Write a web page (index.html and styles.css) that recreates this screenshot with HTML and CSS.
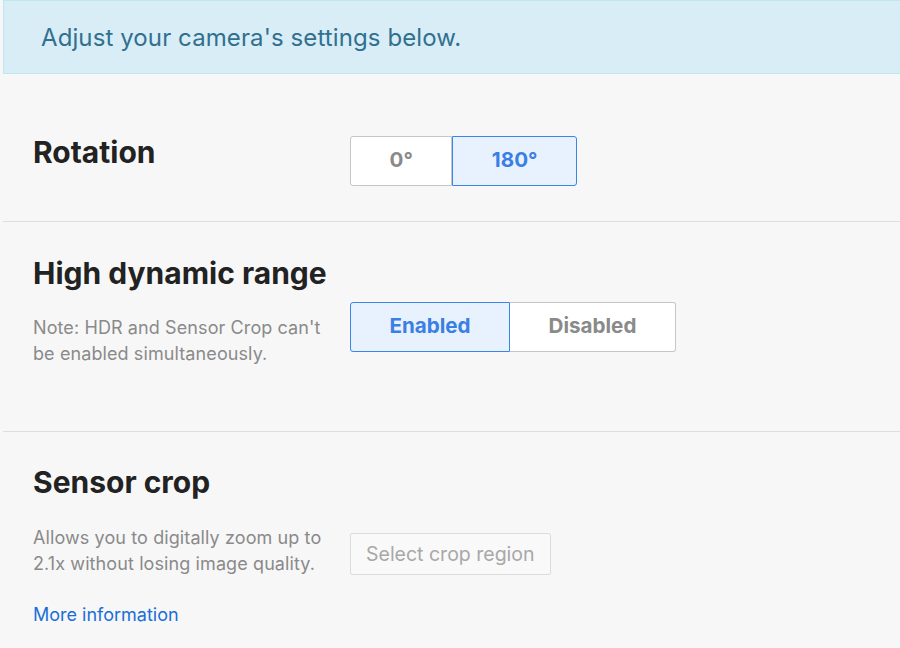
FILE: index.html
```html
<!DOCTYPE html>
<html>
<head>
<meta charset="utf-8">
<link rel="stylesheet" href="styles.css">
</head>
<body>
<div class="page">
  <div class="banner">Adjust your camera's settings below.</div>

  <section class="setting s-rotation">
    <div class="left">
      <h2>Rotation</h2>
    </div>
    <div class="right">
      <div class="seg">
        <button class="opt">0°</button>
        <button class="opt active">180°</button>
      </div>
    </div>
  </section>

  <section class="setting s-hdr">
    <div class="left">
      <h2>High dynamic range</h2>
      <p class="note">Note: HDR and Sensor Crop can't be enabled simultaneously.</p>
    </div>
    <div class="right">
      <div class="seg">
        <button class="opt active">Enabled</button>
        <button class="opt">Disabled</button>
      </div>
    </div>
  </section>

  <section class="setting s-crop">
    <div class="left">
      <h2>Sensor crop</h2>
      <p class="note">Allows you to digitally zoom up to 2.1x without losing image quality.</p>
      <a class="more" href="#">More information</a>
    </div>
    <div class="right">
      <button class="plain" disabled>Select crop region</button>
    </div>
  </section>
</div>
</body>
</html>
```

FILE: styles.css
```css
html, body {
  margin: 0;
  padding: 0;
  background: #f7f7f7;
}
body {
  font-family: Inter, "Noto Sans", sans-serif;
  color: #222;
  overflow: hidden;
  height: 648px;
}
.page {
  margin-left: 3px;
}
.banner {
  background: #d9edf7;
  border: 1px solid #bce8f1;
  border-right: none;
  color: #31708f;
  font-size: 24px;
  letter-spacing: 0.1px;
  height: 72px;
  box-sizing: content-box;
  display: flex;
  align-items: center;
  padding-left: 37px;
}
.setting {
  display: flex;
  align-items: flex-start;
  padding-left: 30px;
}
.setting + .setting {
  border-top: 1px solid #dedede;
}
.left {
  width: 317px;
  flex: none;
}
h2 {
  margin: 0;
  font-size: 30px;
  font-weight: 700;
  line-height: 36px;
  color: #222;
}
.note {
  margin: 0;
  max-width: 300px;
  font-size: 18px;
  line-height: 26px;
  color: #8a8a8a;
  letter-spacing: 0.1px;
}
.s-rotation {
  padding-top: 60px;
  height: 87px;
}
.s-rotation .right {
  margin-top: 2px;
}
.s-hdr {
  padding-top: 33px;
  height: 176px;
}
.s-hdr .note {
  margin-top: 24px;
}
.s-hdr .right {
  margin-top: 47px;
}
.s-crop {
  padding-top: 32px;
  height: 184px;
}
.s-crop .note {
  margin-top: 25px;
}
.s-crop .right {
  margin-top: 69px;
}
.more {
  display: block;
  margin-top: 26px;
  font-size: 18px;
  line-height: 24px;
  color: #1a6fd6;
  text-decoration: none;
}
.seg {
  display: flex;
}
.opt {
  font-family: inherit;
  font-size: 20.6px;
  font-weight: 700;
  height: 50px;
  padding: 0 38.5px 3px;
  background: #fff;
  color: #8a8a8a;
  border: 1px solid #c6c6c6;
  margin: 0;
  cursor: pointer;
}
.opt:first-child {
  border-radius: 3px 0 0 3px;
}
.opt:last-child {
  border-radius: 0 3px 3px 0;
}
.opt + .opt {
  border-left: none;
}
.opt.active {
  background: #e8f1fe;
  color: #3a7fe3;
  border: 1px solid #3b84ee;
}
.plain {
  font-family: inherit;
  font-size: 19.5px;
  height: 42px;
  padding: 0 15px;
  background: #f9f9f9;
  color: #a8a8a8;
  border: 1px solid #dcdcdc;
  border-radius: 2px;
}
```
